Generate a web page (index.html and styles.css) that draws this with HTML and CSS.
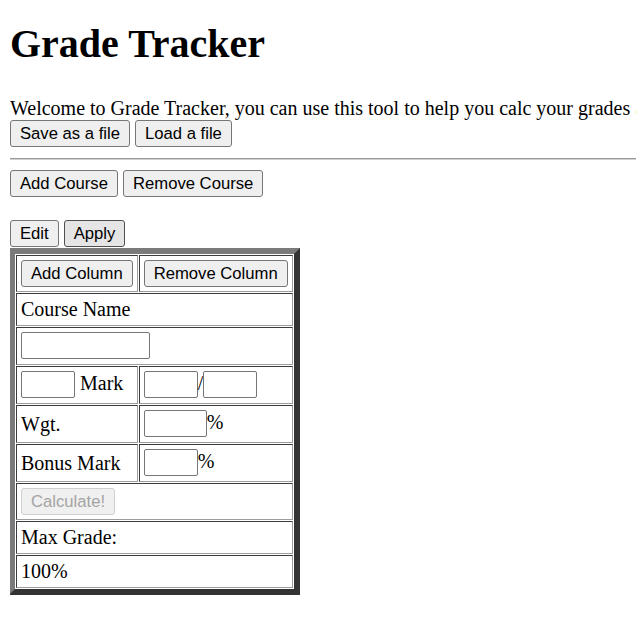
FILE: index.html
```html
<!DOCTYPE html>
<html>
<head>
<meta charset="utf-8">
<title>Grade Tracker</title>
<link rel="stylesheet" href="styles.css">
</head>
<body>
<h1 class="title">Grade Tracker</h1>
<div class="intro">Welcome to Grade Tracker, you can use this tool to help you calc your grades and see what you need on your finals.<br><button class="btn">Save as a file</button> <button class="btn">Load a file</button></div>
<hr class="rule">
<div class="line"><button class="btn">Add Course</button> <button class="btn">Remove Course</button></div>
<div class="blank"><br></div>
<div class="line"><button class="btn">Edit</button> <button class="btn btn-hover">Apply</button></div>
<table class="course">
<tr>
<td class="cell"><button class="btn">Add Column</button></td>
<td class="cell"><button class="btn">Remove Column</button></td>
</tr>
<tr><td class="cell" colspan="2">Course Name</td></tr>
<tr><td class="cell" colspan="2"><input class="field field-name" type="text"></td></tr>
<tr>
<td class="cell"><input class="field field-sm" type="text"> Mark</td>
<td class="cell"><input class="field field-sm" type="text">/<input class="field field-sm" type="text"></td>
</tr>
<tr>
<td class="cell">Wgt.</td>
<td class="cell"><input class="field field-md" type="text">%</td>
</tr>
<tr>
<td class="cell">Bonus Mark</td>
<td class="cell"><input class="field field-sm" type="text">%</td>
</tr>
<tr><td class="cell" colspan="2"><button class="btn" disabled>Calculate!</button></td></tr>
<tr><td class="cell" colspan="2">Max Grade:</td></tr>
<tr><td class="cell" colspan="2">100%</td></tr>
</table>
</body>
</html>
```
FILE: styles.css
```css
html {
  overflow: hidden;
}
body {
  margin: 0 0 10px 10px;
  font-family: "Liberation Serif", "Times New Roman", serif;
  font-size: 20px;
  line-height: 23px;
  color: #000;
  background: #fff;
}
.title {
  font-size: 40px;
  line-height: 46px;
  font-weight: bold;
  margin: 21.4px 0 30px;
}
.intro {
  white-space: nowrap;
}
.rule {
  margin: 10.5px 0;
  border: 0;
  border-top: 1px solid #9a9a9a;
  border-bottom: 1px solid #d0d0d0;
  height: 0;
}
.line {
  white-space: nowrap;
}
.btn {
  font-family: "Liberation Sans", Arial, sans-serif;
  font-size: 16.67px;
  line-height: 19px;
  padding: 3px 9px;
  margin: 0;
  border: 1px solid #767676;
  border-radius: 3px;
  background: #efefef;
  color: #000;
}
.btn-hover {
  background: #e5e5e5;
  border-color: #4f4f4f;
}
.btn:disabled {
  color: #a4a4a4;
  background: #f0f0f0;
  border-color: #d0d0d0;
}
.course {
  margin: 1px 0 0 -1px;
  border-collapse: separate;
  border-spacing: 1px;
  border: 6px solid;
  border-color: #7a7a7a #333 #333 #7a7a7a;
}
.cell {
  padding: 4px;
  border: 1px solid;
  border-color: #3c3c3c #9c9c9c #9c9c9c #3c3c3c;
  white-space: nowrap;
}
.field {
  box-sizing: border-box;
  height: 27px;
  margin: 0 0 1px;
  padding: 1px 2px;
  border: 1px solid #767676;
  border-radius: 2px;
  font-family: "Liberation Sans", Arial, sans-serif;
  font-size: 16.67px;
  vertical-align: baseline;
}
.field-name {
  width: 129px;
}
.field-sm {
  width: 54px;
}
.field-md {
  width: 63px;
}
```
